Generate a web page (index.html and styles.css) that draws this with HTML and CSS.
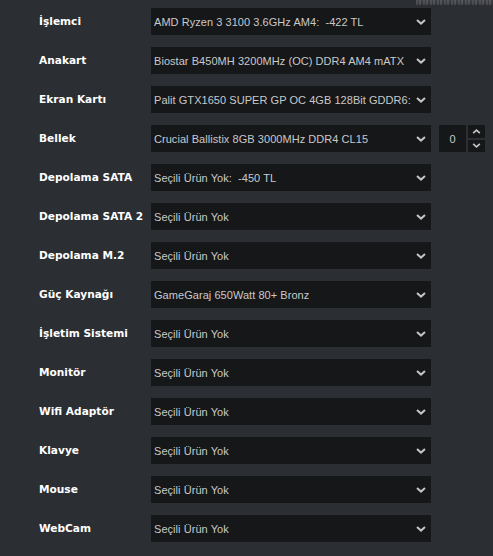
FILE: index.html
```html
<!DOCTYPE html>
<html lang="tr">
<head>
<meta charset="utf-8">
<link rel="stylesheet" href="styles.css">
</head>
<body>
<div class="texture"></div>
<div class="form">
  <div class="row"><div class="label">İşlemci</div><div class="select"><span class="val">AMD Ryzen 3 3100 3.6GHz AM4:&nbsp; -422 TL</span><svg class="chev" viewBox="0 0 10 6"><path d="M1 1 L5 4.6 L9 1" /></svg></div></div>
  <div class="row"><div class="label">Anakart</div><div class="select"><span class="val">Biostar B450MH 3200MHz (OC) DDR4 AM4 mATX</span><svg class="chev" viewBox="0 0 10 6"><path d="M1 1 L5 4.6 L9 1" /></svg></div></div>
  <div class="row"><div class="label">Ekran Kartı</div><div class="select"><span class="val">Palit GTX1650 SUPER GP OC 4GB 128Bit GDDR6:&nbsp; -1250 TL</span><svg class="chev" viewBox="0 0 10 6"><path d="M1 1 L5 4.6 L9 1" /></svg></div></div>
  <div class="row"><div class="label">Bellek</div><div class="select"><span class="val">Crucial Ballistix 8GB 3000MHz DDR4 CL15</span><svg class="chev" viewBox="0 0 10 6"><path d="M1 1 L5 4.6 L9 1" /></svg></div>
    <div class="qty">0</div>
    <div class="spin">
      <div class="btn"><svg viewBox="0 0 10 6"><path d="M1 5 L5 1.4 L9 5" /></svg></div>
      <div class="btn"><svg viewBox="0 0 10 6"><path d="M1 1 L5 4.6 L9 1" /></svg></div>
    </div>
  </div>
  <div class="row"><div class="label">Depolama SATA</div><div class="select"><span class="val">Seçili Ürün Yok:&nbsp; -450 TL</span><svg class="chev" viewBox="0 0 10 6"><path d="M1 1 L5 4.6 L9 1" /></svg></div></div>
  <div class="row"><div class="label">Depolama SATA 2</div><div class="select"><span class="val">Seçili Ürün Yok</span><svg class="chev" viewBox="0 0 10 6"><path d="M1 1 L5 4.6 L9 1" /></svg></div></div>
  <div class="row"><div class="label">Depolama M.2</div><div class="select"><span class="val">Seçili Ürün Yok</span><svg class="chev" viewBox="0 0 10 6"><path d="M1 1 L5 4.6 L9 1" /></svg></div></div>
  <div class="row"><div class="label">Güç Kaynağı</div><div class="select"><span class="val">GameGaraj 650Watt 80+ Bronz</span><svg class="chev" viewBox="0 0 10 6"><path d="M1 1 L5 4.6 L9 1" /></svg></div></div>
  <div class="row"><div class="label">İşletim Sistemi</div><div class="select"><span class="val">Seçili Ürün Yok</span><svg class="chev" viewBox="0 0 10 6"><path d="M1 1 L5 4.6 L9 1" /></svg></div></div>
  <div class="row"><div class="label">Monitör</div><div class="select"><span class="val">Seçili Ürün Yok</span><svg class="chev" viewBox="0 0 10 6"><path d="M1 1 L5 4.6 L9 1" /></svg></div></div>
  <div class="row"><div class="label">Wifi Adaptör</div><div class="select"><span class="val">Seçili Ürün Yok</span><svg class="chev" viewBox="0 0 10 6"><path d="M1 1 L5 4.6 L9 1" /></svg></div></div>
  <div class="row"><div class="label">Klavye</div><div class="select"><span class="val">Seçili Ürün Yok</span><svg class="chev" viewBox="0 0 10 6"><path d="M1 1 L5 4.6 L9 1" /></svg></div></div>
  <div class="row"><div class="label">Mouse</div><div class="select"><span class="val">Seçili Ürün Yok</span><svg class="chev" viewBox="0 0 10 6"><path d="M1 1 L5 4.6 L9 1" /></svg></div></div>
  <div class="row"><div class="label">WebCam</div><div class="select"><span class="val">Seçili Ürün Yok</span><svg class="chev" viewBox="0 0 10 6"><path d="M1 1 L5 4.6 L9 1" /></svg></div></div>
</div>
</body>
</html>
```
FILE: styles.css
```css
html, body {
  margin: 0;
  padding: 0;
  background: #2b2e33;
  height: 100%;
}
body {
  position: relative;
  overflow: hidden;
}
.texture {
  position: absolute;
  top: 0;
  left: 416px;
  right: 0;
  height: 5px;
  background:
    repeating-linear-gradient(90deg, rgba(90,92,96,0.55) 0 2px, rgba(50,52,56,0.3) 2px 3px, rgba(110,112,115,0.4) 3px 5px, rgba(45,47,51,0.2) 5px 7px),
    linear-gradient(180deg, #44464a 0, #3a3c40 3px, #2b2e33 5px);
}
.form {
  display: flex;
  flex-direction: column;
  gap: 12px;
  padding: 8px 0 0 39px;
}
.row {
  display: flex;
  align-items: center;
  height: 27px;
}
.label {
  width: 112px;
  flex: none;
  font-family: "DejaVu Sans", sans-serif;
  font-weight: bold;
  font-size: 10.6px;
  color: #ffffff;
  margin-top: -1px;
}
.select {
  width: 280px;
  height: 27px;
  flex: none;
  background: #161719;
  display: flex;
  align-items: center;
  box-sizing: border-box;
  padding: 0 5px 0 3px;
}
.val {
  flex: 1;
  min-width: 0;
  overflow: hidden;
  white-space: nowrap;
  font-family: "Liberation Sans", sans-serif;
  font-size: 11px;
  letter-spacing: 0.05px;
  color: #c9c9c9;
}
.chev {
  width: 10px;
  height: 6px;
  flex: none;
  margin-left: 1px;
}
.chev path, .btn path {
  fill: none;
  stroke: #c4c4c4;
  stroke-width: 2;
}
.qty {
  width: 27px;
  height: 27px;
  margin-left: 8px;
  background: #161719;
  display: flex;
  align-items: center;
  justify-content: center;
  font-family: "Liberation Sans", sans-serif;
  font-size: 11px;
  color: #c9c9c9;
}
.spin {
  margin-left: 2px;
  width: 17px;
  height: 27px;
  display: flex;
  flex-direction: column;
  gap: 2px;
}
.btn {
  flex: 1;
  background: #161719;
  display: flex;
  align-items: center;
  justify-content: center;
}
.btn svg {
  width: 9px;
  height: 5px;
}
```
